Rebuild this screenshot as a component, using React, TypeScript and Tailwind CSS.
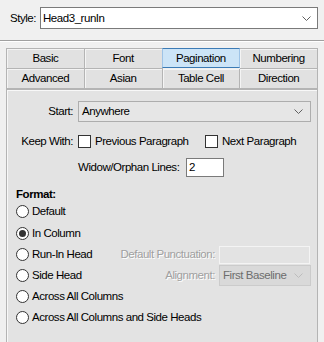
import React from "react";

const tabs = [
  ["Basic", "Font", "Pagination", "Numbering"],
  ["Advanced", "Asian", "Table Cell", "Direction"],
];

const formats = [
  "Default",
  "In Column",
  "Run-In Head",
  "Side Head",
  "Across All Columns",
  "Across All Columns and Side Heads",
];

function Chevron({ color = "#606060" }: { color?: string }) {
  return (
    <svg width="9" height="5" viewBox="0 0 9 5" className="shrink-0">
      <path d="M0.5 0.5 L4.5 4.5 L8.5 0.5" fill="none" stroke={color} strokeWidth="1" />
    </svg>
  );
}

function Radio({ checked }: { checked?: boolean }) {
  return (
    <span className="flex size-[13px] shrink-0 items-center justify-center rounded-full border border-[#333] bg-white">
      {checked && <span className="size-[7px] rounded-full bg-[#333]" />}
    </span>
  );
}

function Checkbox() {
  return <span className="size-[13px] shrink-0 border border-[#333] bg-white" />;
}

const disabledText = "text-[#a0a0a0] [text-shadow:1px_1px_0_#ffffff]";

export default function App() {
  return (
    <div className="h-[342px] w-[324px] overflow-hidden bg-[#f0f0f0] font-['Liberation_Sans',Arial,sans-serif] text-[11.5px] leading-[13px] tracking-[-0.45px] text-black">
      {/* Style picker */}
      <div className="flex items-center pl-[10px] pt-[7px]">
        <span className="w-[30px]">Style:</span>
        <div className="flex h-[22px] w-[278px] items-center justify-between border border-[#7a7a7a] bg-white pl-[2px] pr-[6px]">
          <span>Head3_runIn</span>
          <Chevron />
        </div>
      </div>

      <div className="mt-[11px] h-[2px] border-t border-t-[#a0a0a0] border-b border-b-white" />

      {/* Tabs */}
      <div className="mx-[6px] mt-[6px] border-l border-t border-[#b4b4b4]">
        {tabs.map((row, i) => (
          <div key={i} className="grid grid-cols-4">
            {row.map((t) => {
              const active = t === "Pagination";
              return (
                <div
                  key={t}
                  className={
                    active
                      ? "flex h-[20px] items-center justify-center border-x border-y border-x-[#9ec3e6] border-y-[#3c7bb5] bg-[#cce4f7] -mt-px -ml-px"
                      : "flex h-[20px] items-center justify-center border-b border-r border-[#b4b4b4] bg-[#e1e1e1] shadow-[inset_1px_1px_0_#f4f4f4]"
                  }
                >
                  {t}
                </div>
              );
            })}
          </div>
        ))}
      </div>

      {/* Pagination panel */}
      <div className="mx-[6px] h-[270px] border border-[#b4b4b4] bg-[#e3e3e3] pr-[6px] pt-[11px] shadow-[inset_1px_1px_0_#f8f8f8]">
        <div className="flex h-[21px] items-center">
          <span className="w-[66px] text-right">Start:</span>
          <div className="ml-[5px] flex h-[21px] flex-1 items-center justify-between border border-[#adadad] bg-[#e6e6e6] pl-[3px] pr-[7px]">
            <span>Anywhere</span>
            <Chevron />
          </div>
        </div>

        <div className="mt-[13px] flex h-[13px] items-center">
          <span className="w-[66px] text-right">Keep With:</span>
          <div className="ml-[5px] flex w-[127px] items-center gap-[4px]">
            <Checkbox />
            <span>Previous Paragraph</span>
          </div>
          <div className="flex items-center gap-[4px]">
            <Checkbox />
            <span>Next Paragraph</span>
          </div>
        </div>

        <div className="mt-[10px] flex h-[19px] items-center pl-[71px]">
          <span className="w-[108px]">Widow/Orphan Lines:</span>
          <div className="flex h-[19px] w-[38px] items-center border border-[#7a7a7a] bg-white pl-[2px]">2</div>
        </div>

        <div className="mt-[11px] pl-[9px] font-bold">Format:</div>

        <div className="pl-[9px]">
          {formats.map((f, i) => (
            <div key={f} className={`flex h-[21px] items-center ${i === 1 ? "mt-px" : ""}`}>
              <div className="flex flex-1 items-center gap-[3px]">
                <Radio checked={f === "In Column"} />
                <span>{f}</span>
              </div>
              {f === "Run-In Head" && (
                <>
                  <span className={disabledText}>Default Punctuation:</span>
                  <div className="ml-[4px] mr-px h-[18px] w-[91px] border border-[#f4f4f4] bg-[#e3e3e3]" />
                </>
              )}
              {f === "Side Head" && (
                <>
                  <span className={disabledText}>Alignment:</span>
                  <div className="ml-[4px] flex h-[21px] w-[92px] items-center justify-between border border-[#cbcbcb] bg-[#d9d9d9] pl-[3px] pr-[7px] text-[#6d6d6d]">
                    <span>First Baseline</span>
                    <Chevron color="#bcbcbc" />
                  </div>
                </>
              )}
            </div>
          ))}
        </div>
      </div>
    </div>
  );
}
